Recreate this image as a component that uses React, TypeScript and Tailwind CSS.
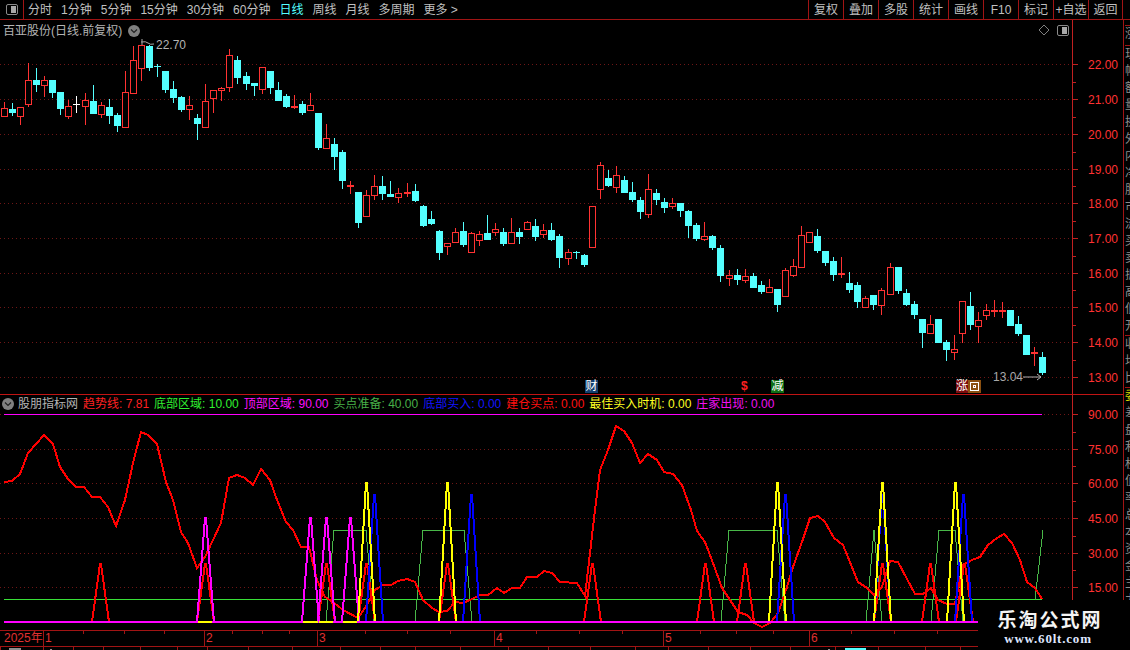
import React from 'react';

type Candle = [string, number, number, number, number];

const RED = '#ff3232';
const CYAN = '#54ffff';

// type, wick top, body top, body bottom, wick bottom (page pixels)
const candles: Candle[] = [
  ['r', 102, 108, 116, 117], ['c', 103, 109, 112, 116], ['r', 107, 107, 116, 125], ['r', 63, 80, 104, 107],
  ['c', 68, 80, 84, 92], ['r', 76, 80, 85, 97], ['c', 80, 80, 92, 98], ['c', 92, 92, 108, 115],
  ['r', 100, 106, 116, 119], ['w', 96, 104, 105, 113], ['r', 93, 100, 106, 125], ['c', 85, 101, 113, 114],
  ['r', 102, 105, 114, 118], ['c', 99, 107, 115, 124], ['c', 113, 115, 125, 132], ['r', 71, 92, 127, 127],
  ['r', 46, 60, 93, 94], ['r', 45, 45, 68, 81], ['c', 45, 46, 67, 71], ['c', 64, 66, 67, 77],
  ['c', 71, 71, 89, 93], ['c', 81, 89, 97, 103], ['c', 96, 97, 109, 112], ['r', 96, 105, 109, 120],
  ['c', 114, 118, 123, 140], ['r', 84, 101, 127, 127], ['r', 90, 90, 98, 113], ['r', 87, 88, 90, 101],
  ['r', 49, 55, 87, 92], ['c', 56, 60, 77, 84], ['c', 72, 76, 83, 90], ['c', 83, 83, 85, 96],
  ['r', 67, 67, 89, 94], ['c', 71, 71, 87, 94], ['c', 82, 90, 100, 100], ['c', 94, 96, 106, 108],
  ['r', 95, 106, 107, 109], ['c', 101, 104, 112, 115], ['r', 93, 105, 110, 111], ['c', 113, 113, 147, 150],
  ['r', 124, 138, 148, 148], ['c', 138, 144, 156, 170], ['c', 150, 152, 180, 189], ['r', 181, 185, 186, 194],
  ['c', 192, 192, 222, 228], ['r', 190, 195, 216, 216], ['r', 175, 186, 195, 200], ['c', 176, 186, 193, 200],
  ['c', 181, 194, 196, 197], ['r', 188, 193, 197, 203], ['r', 183, 192, 193, 197], ['c', 184, 191, 200, 202],
  ['c', 205, 206, 225, 227], ['c', 211, 219, 223, 225], ['c', 230, 231, 252, 260], ['r', 243, 243, 246, 255],
  ['r', 228, 232, 242, 242], ['c', 222, 231, 244, 247], ['r', 232, 233, 252, 252], ['r', 231, 234, 240, 246],
  ['c', 215, 233, 239, 239], ['r', 223, 229, 232, 236], ['c', 228, 232, 243, 246], ['r', 218, 232, 243, 244],
  ['c', 228, 232, 236, 244], ['r', 221, 222, 229, 230], ['c', 219, 226, 236, 241], ['r', 224, 230, 234, 238],
  ['c', 223, 230, 239, 241], ['c', 234, 236, 257, 268], ['r', 249, 252, 258, 265], ['c', 251, 252, 253, 259],
  ['c', 254, 255, 264, 267], ['r', 206, 206, 247, 247], ['r', 162, 165, 189, 199], ['c', 170, 178, 185, 187],
  ['r', 166, 175, 187, 193], ['c', 176, 180, 192, 193], ['c', 182, 192, 199, 202], ['c', 197, 200, 211, 219],
  ['r', 174, 189, 214, 218], ['c', 189, 193, 199, 205], ['c', 198, 202, 207, 213], ['r', 198, 203, 206, 209],
  ['c', 203, 203, 210, 217], ['c', 210, 211, 225, 238], ['c', 223, 225, 238, 241], ['r', 222, 236, 239, 241],
  ['c', 235, 236, 247, 250], ['c', 245, 248, 275, 282], ['r', 270, 275, 278, 286], ['c', 269, 275, 279, 285],
  ['r', 269, 276, 280, 283], ['c', 273, 276, 287, 287], ['c', 281, 285, 291, 294], ['r', 279, 287, 292, 292],
  ['c', 289, 289, 304, 312], ['r', 268, 270, 296, 296], ['r', 259, 266, 275, 277], ['r', 226, 235, 267, 267],
  ['r', 232, 232, 242, 242], ['c', 229, 236, 250, 253], ['c', 251, 251, 262, 266], ['c', 257, 261, 274, 281],
  ['r', 257, 273, 274, 278], ['c', 272, 283, 289, 293], ['c', 282, 285, 301, 308], ['r', 296, 298, 307, 307],
  ['c', 295, 295, 304, 310], ['r', 288, 290, 305, 315], ['r', 263, 267, 294, 294], ['c', 267, 267, 290, 294],
  ['c', 289, 293, 304, 306], ['c', 301, 304, 314, 319], ['c', 319, 319, 332, 348], ['r', 315, 324, 333, 333],
  ['c', 319, 319, 342, 343], ['c', 340, 342, 349, 361], ['r', 335, 349, 352, 360], ['r', 301, 301, 333, 343],
  ['c', 292, 306, 324, 330], ['r', 312, 320, 326, 343], ['r', 304, 310, 315, 320], ['r', 300, 310, 311, 317],
  ['r', 302, 310, 311, 318], ['c', 310, 310, 325, 325], ['c', 316, 324, 333, 336], ['c', 335, 335, 354, 355],
  ['r', 347, 352, 353, 366], ['c', 352, 357, 372, 375],
];

const priceTicks = [
  ['22.00', 64], ['21.00', 99], ['20.00', 134], ['19.00', 169], ['18.00', 203],
  ['17.00', 238], ['16.00', 273], ['15.00', 307], ['14.00', 342], ['13.00', 377],
] as const;

const indicatorTicks = [
  ['90.00', 414], ['75.00', 449], ['60.00', 483], ['45.00', 518], ['30.00', 553], ['15.00', 587],
] as const;

const trend = [
  [4, 482], [12, 481], [20, 474], [28, 453], [36, 444], [44, 435], [53, 444], [60, 467], [68, 479], [76, 487],
  [84, 487], [92, 497], [100, 497], [108, 507], [116, 526], [125, 500], [133, 463], [141, 432], [148, 435], [157, 444],
  [166, 482], [173, 500], [181, 532], [188, 543], [197, 568], [205, 557], [213, 540], [221, 523], [229, 478], [237, 475],
  [245, 478], [253, 485], [261, 469], [270, 480], [277, 500], [286, 522], [293, 530], [301, 547], [309, 547], [317, 580],
  [325, 597], [333, 602], [343, 610], [358, 618], [367, 605], [375, 590], [383, 585], [391, 585], [398, 581], [407, 579],
  [415, 582], [423, 600], [432, 608], [439, 612], [447, 611], [455, 602], [463, 603], [472, 599], [480, 595], [488, 595],
  [497, 588], [504, 593], [512, 588], [520, 588], [527, 577], [537, 577], [544, 571], [552, 573], [560, 582], [577, 583],
  [585, 596], [595, 510], [600, 470], [608, 450], [616, 426], [624, 431], [632, 443], [640, 463], [648, 454], [657, 460],
  [664, 472], [673, 474], [682, 485], [691, 510], [697, 531], [705, 542], [713, 563], [722, 588], [730, 600], [738, 612],
  [747, 615], [754, 623], [762, 627], [770, 623], [778, 613], [787, 587], [793, 567], [802, 542], [810, 518], [818, 516],
  [825, 522], [834, 538], [843, 545], [858, 582], [867, 588], [874, 595], [882, 587], [890, 561], [898, 562], [915, 594],
  [923, 594], [931, 588], [938, 600], [947, 604], [955, 604], [963, 565], [972, 560], [980, 557], [988, 545], [997, 538],
  [1004, 534], [1012, 543], [1020, 560], [1027, 582], [1035, 588], [1042, 599],
];

const ZERO = 622;
const spike = (x: number, top: number) => `${x - 8},${ZERO} ${x},${top} ${x + 1},${top} ${x + 9},${ZERO}`;
const toPoints = (pts: number[][]) => pts.map((p) => p.join(',')).join(' ');

const redSpikes = [100, 205, 326, 366, 447, 592, 705, 745, 882, 930, 964];
const magentaSpikes = [205, 310, 326, 350];
const yellowSpikes = [366, 447, 777, 882, 955];
const blueSpikes = [374, 471, 785, 882, 963];
const yellowBase = [[198, 212], [303, 318], [319, 333], [343, 357]];

const greenLines = [
  '326,622 334,530 366,530 374,622',
  '415,622 423,530 464,530 472,622',
  '721,622 729,530 777,530 785,622',
  '866,622 874,530 882,622',
  '931,622 939,530 955,530 963,622',
  '1035,600 1043,530',
];

const monthLines = [
  ['1', 43], ['2', 204], ['3', 317], ['4', 494], ['5', 663], ['6', 809],
] as const;
const minorTicks = [83, 124, 164, 232, 262, 289, 365, 407, 450, 536, 579, 622, 700, 736, 773, 851, 894, 937];
const lowerTicks = [0, 43, 73, 103, 140, 177, 207, 248, 292, 340, 380, 415, 460, 508, 548, 590, 635, 668, 708, 750, 790, 835, 878, 925, 960];

const leftMenu = ['分时', '1分钟', '5分钟', '15分钟', '30分钟', '60分钟', '日线', '周线', '月线', '多周期', '更多 >'];
const rightMenu = ['复权', '叠加', '多股', '统计', '画线', 'F10', '标记', '+自选', '返回'];

const indicatorFields = [
  { name: '趋势线', value: '7.81', cls: 'text-[#ff2020]' },
  { name: '底部区域', value: '10.00', cls: 'text-[#30f030]' },
  { name: '顶部区域', value: '90.00', cls: 'text-[#ff10ff]' },
  { name: '买点准备', value: '40.00', cls: 'text-[#48b048]' },
  { name: '底部买入', value: '0.00', cls: 'text-[#1414ff]' },
  { name: '建仓买点', value: '0.00', cls: 'text-[#ff1010]' },
  { name: '最佳买入时机', value: '0.00', cls: 'text-[#ffff20]' },
  { name: '庄家出现', value: '0.00', cls: 'text-[#f010f0]' },
];

const sideRows = ['涨', '现', '幅', '额', '量', '换', '外', '内', '净', '股', '市', '流', '买', '卖', '振', '高', '低', '开', '收', '均', '比', '委', '差', '盘', '利', '权', '值', '率', '总', '本', '资', '金', '主', '力', '散'];

function PanelIcon() {
  return (
    <div className="w-[12px] h-[11px] rounded-[2px] border border-[#8a8a8a] flex justify-end items-center pr-[1px]">
      <div className="w-[5px] h-[7px] bg-[#a8a8a8]" />
    </div>
  );
}

function ChevronBadge({ className }: { className: string }) {
  return (
    <span className={`w-[12px] h-[12px] rounded-full bg-[#808080] flex items-center justify-center ${className}`}>
      <svg width="8" height="6" viewBox="0 0 8 6">
        <path d="M1 1.5 L4 4.5 L7 1.5" fill="none" stroke="#202020" strokeWidth="1.2" />
      </svg>
    </span>
  );
}

function Toolbar() {
  return (
    <div className="h-[20px] shrink-0 flex items-stretch border-b border-[#a01414] text-[12px] text-[#c0c0c0] leading-[20px]">
      <div className="w-[24px] shrink-0 border-r border-[#a01414] flex items-center justify-center">
        <PanelIcon />
      </div>
      <div className="flex gap-[9px] pl-[4px]">
        {leftMenu.map((item) => (
          <span key={item} className={`whitespace-nowrap ${item === '日线' ? 'text-[#54ffff]' : ''}`}>{item}</span>
        ))}
      </div>
      <div className="ml-auto flex mr-[7px]">
        {rightMenu.map((item) => (
          <span key={item} className="w-[35px] border-l border-[#a01414] text-center whitespace-nowrap last:border-r">{item}</span>
        ))}
      </div>
    </div>
  );
}

function AxisTicks({ ticks, gridEnd }: { ticks: readonly (readonly [string, number])[]; gridEnd: number }) {
  return (
    <g>
      {ticks.map(([label, y], i) => (
        <g key={label}>
          <line x1={0} x2={gridEnd} y1={y + 0.5} y2={y + 0.5} stroke="#6e1616" strokeDasharray="1 3" />
          <line x1={1072} x2={1078} y1={y + 0.5} y2={y + 0.5} stroke="#c02020" />
          {i < ticks.length - 1 && (
            <line x1={1072} x2={1076} y1={Math.round((y + ticks[i + 1][1]) / 2) + 0.5} y2={Math.round((y + ticks[i + 1][1]) / 2) + 0.5} stroke="#c02020" />
          )}
          <text x={1118} y={y + 5} textAnchor="end" fill={RED} fontSize="12">{label}</text>
        </g>
      ))}
    </g>
  );
}

function CandleMark({ data, index }: { data: Candle; index: number }) {
  const [type, wickTop, top, bottom, wickBottom] = data;
  const c = Math.round(4 + 8.05 * index);
  const color = type === 'r' ? RED : type === 'c' ? CYAN : '#ffffff';
  const flat = bottom - top <= 1;
  return (
    <g>
      <line x1={c + 0.5} x2={c + 0.5} y1={wickTop} y2={wickBottom} stroke={color} />
      {flat ? (
        <rect x={c - 3} y={top} width={7} height={type === 'r' ? 2 : 1} fill={color} />
      ) : type === 'r' ? (
        <rect x={c - 2.5} y={top + 0.5} width={6} height={bottom - top} fill="#000" stroke={color} />
      ) : (
        <rect x={c - 3} y={top} width={7} height={bottom - top + 1} fill={color} />
      )}
    </g>
  );
}

function PricePane() {
  return (
    <div className="relative h-[375px] shrink-0 border-b border-[#c01414]">
      <svg width="1123" height="374" viewBox="0 20 1123 374" shapeRendering="crispEdges" className="block">
        <line x1={1072.5} x2={1072.5} y1={20} y2={394} stroke="#c02020" />
        <AxisTicks ticks={priceTicks} gridEnd={1072} />
        {candles.map((d, i) => <CandleMark key={i} data={d} index={i} />)}
        <g shapeRendering="auto">
          <path d="M142 45 L142 39 M141 42 Q146 41 148 43 T154 44" fill="none" stroke="#a8a8a8" />
          <path d="M1023 377 H1041 M1037 374 L1041 377 L1037 380" fill="none" stroke="#b0b0b0" />
        </g>
      </svg>

      <div className="absolute left-[3px] top-[1px] h-[19px] flex items-center gap-[6px] text-[12px] text-[#b4b4b4]">
        <span>百亚股份(日线.前复权)</span>
        <ChevronBadge className="" />
      </div>
      <div className="absolute left-[1038px] top-[4px] flex items-center gap-[7px]">
        <svg width="12" height="12" viewBox="0 0 12 12">
          <path d="M6 1 L11 6 L6 11 L1 6 Z" fill="none" stroke="#808080" />
        </svg>
        <PanelIcon />
      </div>
      <span className="absolute left-[156px] top-[18px] text-[12px] leading-[14px] text-[#b4b4b4]">22.70</span>
      <span className="absolute left-[993px] top-[350px] text-[12px] leading-[14px] text-[#a8a8a8]">13.04</span>

      <span className="absolute left-[585px] top-[360px] w-[13px] h-[13px] bg-[#123f6e] text-white text-[12px] leading-[13px] text-center">财</span>
      <span className="absolute left-[741px] top-[360px] text-[#ff2020] font-bold text-[12px] leading-[13px]">$</span>
      <span className="absolute left-[771px] top-[360px] w-[13px] h-[13px] bg-[#0f6e14] text-white text-[12px] leading-[13px] text-center">减</span>
      <div className="absolute left-[956px] top-[360px] flex">
        <span className="w-[12px] h-[13px] bg-[#7c0c0c] text-white text-[12px] leading-[13px] text-center">涨</span>
        <span className="w-[13px] h-[13px] bg-[#8b5010] flex items-center justify-center">
          <span className="w-[9px] h-[9px] border border-white flex items-center justify-center">
            <span className="w-[3px] h-[3px] border border-white" />
          </span>
        </span>
      </div>
    </div>
  );
}

function IndicatorPane() {
  return (
    <div className="relative h-[236px] shrink-0 border-b border-[#a01414]">
      <svg width="1123" height="235" viewBox="0 395 1123 235" shapeRendering="crispEdges" className="block">
        <line x1={1072.5} x2={1072.5} y1={395} y2={630} stroke="#c02020" />
        <AxisTicks ticks={indicatorTicks} gridEnd={1072} />
        <line x1={4} x2={1042} y1={414.5} y2={414.5} stroke="#ff00ff" />
        <line x1={4} x2={1042} y1={599.5} y2={599.5} stroke="#38e038" />
        {greenLines.map((p) => <polyline key={p} points={p} fill="none" stroke="#48b848" strokeWidth="1" />)}
        {redSpikes.map((x) => <polyline key={x} points={spike(x, 564)} fill="none" stroke="#ff0000" strokeWidth="2" />)}
        <polyline points={toPoints(trend)} fill="none" stroke="#ff0000" strokeWidth="2" />
        {blueSpikes.map((x) => <polyline key={x} points={spike(x, 495)} fill="none" stroke="#0000ff" strokeWidth="2" />)}
        {magentaSpikes.map((x) => <polyline key={x} points={spike(x, 518)} fill="none" stroke="#ff00ff" strokeWidth="2" />)}
        {yellowSpikes.map((x) => <polyline key={x} points={spike(x, 483)} fill="none" stroke="#ffff00" strokeWidth="2" />)}
        <rect x={4} y={621} width={974} height={2} fill="#ff00ff" />
        {yellowBase.map(([a, b]) => <rect key={a} x={a} y={621} width={b - a} height={2} fill="#ffff00" />)}
      </svg>

      <div className="absolute left-[2px] top-[1px] h-[16px] flex items-center text-[12px] whitespace-nowrap">
        <ChevronBadge className="mr-[4px]" />
        <span className="text-[#b4b4b4] mr-[5px]">股朋指标网</span>
        {indicatorFields.map((f) => (
          <span key={f.name} className={`mr-[5px] ${f.cls}`}>{f.name}: {f.value}</span>
        ))}
      </div>
    </div>
  );
}

function TimeAxis() {
  return (
    <div className="relative h-[20px] shrink-0 w-[978px]">
      <svg width="978" height="20" viewBox="0 631 978 20" shapeRendering="crispEdges" className="block">
        {minorTicks.map((x) => <line key={x} x1={x + 0.5} x2={x + 0.5} y1={631} y2={634} stroke="#a01414" />)}
        {monthLines.map(([label, x]) => <line key={label} x1={x + 0.5} x2={x + 0.5} y1={631} y2={646} stroke="#a01414" />)}
        <line x1={0} x2={978} y1={646.5} y2={646.5} stroke="#a01414" />
        {lowerTicks.map((x) => <line key={x} x1={x + 0.5} x2={x + 0.5} y1={647} y2={651} stroke="#a01414" />)}
        {/* tops of the row below, cut off by the window */}
        <rect x={9} y={648} width={12} height={2} fill="#909090" />
        <rect x={50} y={649} width={2} height={1} fill="#909090" />
        <rect x={828} y={649} width={2} height={1} fill="#909090" />
        <rect x={845} y={648} width={21} height={2} fill="#54ffff" />
      </svg>
      <span className="absolute left-[4px] top-[-1px] text-[12px] leading-[16px] text-[#e03030]">2025年</span>
      {monthLines.map(([label, x]) => (
        <span key={label} className="absolute top-[-1px] text-[12px] leading-[16px] text-[#e03030]" style={{ left: x + 2 }}>{label}</span>
      ))}
    </div>
  );
}

function SideStrip() {
  return (
    <div className="flex-1 overflow-hidden border-l border-[#a01414] text-[12px] leading-[17px] text-[#8c8c8c] pl-[1px] pt-[5px]">
      {sideRows.map((ch, i) => (
        <div
          key={i}
          className={`w-[14px] ${i === 0 ? 'h-[21px] border-y border-[#a01414]' : ''} ${i === 17 || i === 20 ? 'border-b border-[#a01414]' : ''} ${i === 21 ? 'text-[#d8d800]' : ''}`}
        >
          {ch}
        </div>
      ))}
    </div>
  );
}

export default function App() {
  return (
    <div className="relative w-[1130px] h-[650px] bg-black overflow-hidden flex flex-col [font-family:'Liberation_Sans','Noto_Sans_CJK_SC',sans-serif]">
      <Toolbar />
      <div className="flex-1 flex min-h-0">
        <div className="w-[1123px] shrink-0 flex flex-col">
          <PricePane />
          <IndicatorPane />
          <TimeAxis />
        </div>
        <SideStrip />
      </div>

      {/* watermark pasted over the corner */}
      <div className="absolute left-[978px] top-[600px] w-[152px] h-[50px] bg-black flex flex-col items-center pr-[12px]">
        <span className="mt-[8px] ml-[4px] text-[19px] leading-[22px] font-bold tracking-[2px] text-[#f4f4f4] [font-family:'Noto_Sans_CJK_SC',sans-serif]">乐淘公式网</span>
        <span className="mt-[2px] text-[13px] leading-[14px] font-bold tracking-[0.8px] text-[#dfe6ff] [font-family:'Liberation_Serif',serif]">www.60lt.com</span>
      </div>
    </div>
  );
}
